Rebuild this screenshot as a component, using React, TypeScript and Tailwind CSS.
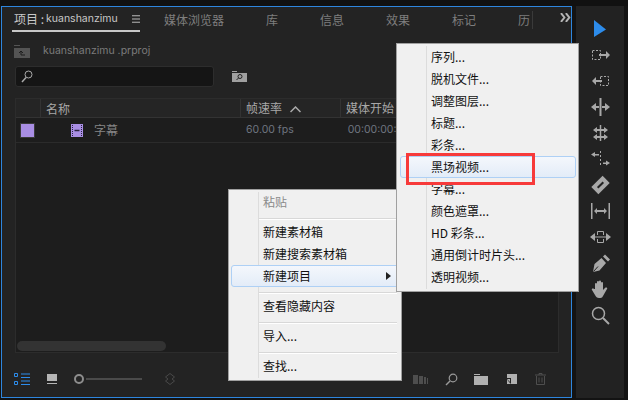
const cjk = "font-['Microsoft_YaHei','Noto_Sans_CJK_SC',sans-serif]";

function Sep() {
  return <div className="mb-[1px] ml-[28px] mr-[3px] mt-[5px] h-[2px] border-t border-[#d8d8d8] bg-white" />;
}

function Item({ label, disabled, active, arrow, pad }: { label: string; disabled?: boolean; active?: boolean; arrow?: boolean; pad: string }) {
  return (
    <div
      className={`relative flex h-[22px] items-center whitespace-nowrap text-[12px] ${pad} ${disabled ? "text-[#8a8a8a]" : "text-[#111]"} ${
        active ? "rounded-[3px] border border-[#aed0f5] bg-gradient-to-b from-[#f4f7fc] to-[#e3ecf8]" : ""
      }`}
    >
      {label}
      {arrow && <div className="absolute right-[8px] top-[6px] h-0 w-0 border-y-[4px] border-l-[5px] border-y-transparent border-l-[#222]" />}
    </div>
  );
}

function Tool({ children }: { children: React.ReactNode }) {
  return <svg width="21" height="20" viewBox="0 0 21 20" className="mb-[6px]">{children}</svg>;
}

function Tools() {
  return (
    <div className="flex w-[48px] flex-col items-center bg-[#222222] pt-[14px] text-[#a8a8a8]">
      <svg width="14" height="17" viewBox="0 0 14 17" className="mb-[8px]"><path d="M1 0 L13 9.500 L1 17 Z" fill="#2d8ceb" /></svg>
      <Tool>
        <rect x="2.500" y="5.500" width="8" height="9" fill="none" stroke="currentColor" strokeDasharray="2 1.500" />
        <path d="M9 9h7V6l4 4-4 4v-3H9z" fill="currentColor" />
      </Tool>
      <Tool>
        <rect x="10.500" y="5.500" width="8" height="9" fill="none" stroke="currentColor" strokeDasharray="2 1.500" />
        <path d="M12 9H6V6l-4 4 4 4v-3h6z" fill="currentColor" />
      </Tool>
      <Tool>
        <path d="M9.500 1h2v18h-2z" fill="currentColor" />
        <path d="M1 10l5-4v3h3v2H6v3zM20 10l-5-4v3h-3v2h3v3z" fill="currentColor" />
      </Tool>
      <Tool>
        <path d="M3 7l4-3v2h7V4l4 3-4 3V8H7v2zM3 14l4-3v2h7v-2l4 3-4 3v-2H7v2z" fill="currentColor" />
        <path d="M10.500 2v16" stroke="currentColor" strokeWidth="1.500" />
      </Tool>
      <Tool>
        <path d="M9 5H5V3L1 5.500 5 8V6.500h4zM13 13.500h3v-2l4 2.500-4 2.500v-1.500h-3z" fill="currentColor" />
        <path d="M10.500 2v16" stroke="currentColor" strokeDasharray="2 2" />
      </Tool>
      <Tool>
        <g transform="rotate(45 10.500 10)">
          <rect x="5.500" y="2" width="10" height="16" fill="currentColor" />
          <rect x="9.500" y="6" width="2" height="8" fill="#222" />
        </g>
      </Tool>
      <Tool>
        <path d="M1 2h1.500v16H1zM18.500 2H20v16h-1.500zM4 10l3-3v2h7V7l3 3-3 3v-2H7v2z" fill="currentColor" />
      </Tool>
      <Tool>
        <path d="M0 10l5-4v8zM21 10l-5-4v8z" fill="currentColor" />
        <path d="M5 10h11" stroke="currentColor" />
        <path d="M7.500 8V4.500h6V8M7.500 12v3.500h6V12" fill="none" stroke="currentColor" />
      </Tool>
      <Tool>
        <path d="M3 19l1.500-8L11.500 5l4.500 5-6.500 7.500zM13 3.500L15 1.500l5 5-2 2z" fill="currentColor" />
        <path d="M3.500 18.500l4.500-5" stroke="#222" />
      </Tool>
      <Tool>
        <path d="M5 10V5a1 1 0 012 0v4-6a1 1 0 012 0v6-6.500a1 1 0 012 0V9V4a1 1 0 012 0v7l2-2c1-1 3 0 2 1l-4 7c-1 2-2 2-4 2H9c-2 0-3-1-4-3l-3-5c-1-1 1-2 2-1z" fill="currentColor" />
      </Tool>
      <Tool>
        <circle cx="8.500" cy="8.500" r="6" fill="none" stroke="currentColor" strokeWidth="1.500" />
        <path d="M13 13l6 6" stroke="currentColor" strokeWidth="2" />
      </Tool>
    </div>
  );
}

export default function App() {
  const pad1 = "pl-[32px]";
  return (
    <div className={`relative flex h-[400px] w-[628px] flex-col overflow-hidden bg-[#131313] ${cjk}`}>
      <div className="h-[6px] bg-[#111]" />
      <div className="flex h-[392px] gap-[4px] pl-[1px]">
        {/* project panel */}
        <div className="flex h-[392px] w-[571px] flex-col border border-[#2e86de] bg-[#232323] text-[#a5a5a5]">
          <div className="flex h-[25px] whitespace-nowrap text-[12px]">
            <div className="ml-[10px] flex h-[25px] w-[128px] items-center border-b-2 border-[#c8c8c8] pl-[2px] text-[#c8c8c8]">
              <span>项目 :</span>
              <span className="ml-[2px] font-['Inter',sans-serif] text-[10.500px]">kuanshanzimu</span>
              <svg width="9" height="8" viewBox="0 0 9 8" className="ml-[14px]"><path d="M0 .5h9M0 4h9M0 7.500h9" stroke="#c8c8c8" /></svg>
            </div>
            <div className="ml-[24px] flex w-[392px] items-center text-[#7e7e7e]">
              <span className="w-[102px]">媒体浏览器</span>
              <span className="w-[54px]">库</span>
              <span className="w-[66px]">信息</span>
              <span className="w-[66px]">效果</span>
              <span className="w-[66px]">标记</span>
              <span className="w-[15px] border-r border-[#3a3a3a]">历</span>
            </div>
            <svg width="11" height="9" viewBox="0 0 11 9" className="ml-[12px] mt-[6px]"><path d="M1 0l3.500 4.500L1 9M6 0l3.500 4.500L6 9" fill="none" stroke="#b5b5b5" strokeWidth="2" /></svg>
          </div>

          <div className="mt-[12px] flex h-[14px] items-center pl-[12px]">
            <svg width="16" height="13" viewBox="0 0 16 13"><path d="M0 0h6v1H0zM0 3h16v10H0z" fill="#545454" /><path d="M5 8l2-2 2 2M7 6v4h4" fill="none" stroke="#1d1d1d" /></svg>
            <span className="ml-[13px] font-['Inter',sans-serif] text-[10.500px] leading-[12px] text-[#7b7b7b]">kuanshanzimu .prproj</span>
          </div>

          <div className="mt-[8px] flex h-[21px] items-center pl-[13px]">
            <div className="flex h-[21px] w-[199px] items-center rounded-[3px] border border-[#2d2d2d] bg-[#151515] pl-[5px]">
              <svg width="12" height="13" viewBox="0 0 12 13"><circle cx="7.500" cy="4.500" r="3.500" fill="none" stroke="#aaa" /><path d="M5 7.500L1 12" stroke="#aaa" strokeWidth="1.500" /></svg>
            </div>
            <svg width="15" height="11" viewBox="0 0 15 11" className="ml-[18px]"><path d="M0 0h5v1H0zM0 2h15v9H0z" fill="#a0a0a0" /><circle cx="8" cy="5.500" r="2" fill="none" stroke="#222" /><path d="M6.500 7L4.500 9" stroke="#222" /></svg>
          </div>

          {/* table */}
          <div className="ml-[13px] mt-[11px] flex h-[255px] w-[544px] flex-col border border-[#2c2c2c] bg-[#1d1d1d]">
            <div className="flex h-[19px] items-center border-b border-[#333] bg-[#252525] text-[12px] text-[#a8a8a8]">
              <div className="h-full w-[25px] border-r border-[#333]" />
              <div className="h-full w-[200px] border-r border-[#333] pl-[5px] leading-[19px]">名称</div>
              <div className="flex h-full w-[100px] items-center border-r border-[#333] pl-[5px]">
                帧速率
                <svg width="11" height="7" viewBox="0 0 11 7" className="ml-[8px] mt-[2px]"><path d="M.5 6l5-5 5 5" fill="none" stroke="#aaa" strokeWidth="1.500" /></svg>
              </div>
              <div className="pl-[5px]">媒体开始</div>
            </div>
            <div className="flex h-[25px] items-center border-b border-[#2b2b2b]">
              <div className="ml-[4px] h-[15px] w-[15px] border border-[#3a3a3a] bg-[#a98ee4]" />
              <svg width="12" height="13" viewBox="0 0 12 13" className="ml-[36px]">
                <rect width="12" height="13" fill="#a98ee4" />
                <path d="M1.500 1v11M10.500 1v11" stroke="#2a2340" strokeDasharray="1 1" />
                <path d="M3.500 6.500h5" stroke="#2a2340" strokeWidth="1.500" />
              </svg>
              <span className="ml-[11px] text-[12px] text-[#858585]">字幕</span>
              <span className="ml-[128px] font-['Inter',sans-serif] text-[10.500px] text-[#6f7580]">60.00 fps</span>
              <span className="ml-[54px] font-['Inter',sans-serif] text-[10.500px] text-[#6f7580]">00:00:00:</span>
            </div>
            <div className="flex-1" />
            <div className="mb-[1px] ml-[1px] h-[10px] w-[149px] rounded-[5px] bg-[#333333]" />
          </div>

          {/* footer */}
          <div className="mt-[19px] flex h-[14px] items-center pl-[12px]">
            <svg width="16" height="12" viewBox="0 0 16 12"><path d="M.5.500h3v3h-3zM.5 8.500h3v3h-3z" fill="none" stroke="#2d8ceb" /><path d="M7 1h9M7 4.500h9M7 8h9M7 11.500h9" stroke="#2d8ceb" /></svg>
            <svg width="10" height="10" viewBox="0 0 10 10" className="ml-[17px]"><path d="M0 0h10v7H0zM0 9h10v1H0z" fill="#b5b5b5" /></svg>
            <div className="ml-[17px] h-[10px] w-[10px] rounded-full border-2 border-[#8d8d8d]" />
            <div className="ml-[2px] h-[2px] w-[56px] bg-[#4a4a4a]" />
            <svg width="10" height="12" viewBox="0 0 10 12" className="ml-[23px]"><path d="M5 .500L9.500 4 7 6l2.500 2L5 11.500.5 8 3 6 .5 4z" fill="none" stroke="#4a4a4a" /></svg>
            <svg width="15" height="9" viewBox="0 0 15 9" className="ml-[238px]"><path d="M0 0h5v9H0zM6 1h4v8H6zM11 2h2v7h-2zM14 3h1v6h-1z" fill="#4e4e4e" /></svg>
            <svg width="13" height="13" viewBox="0 0 13 13" className="ml-[17px]"><circle cx="8" cy="5" r="3.800" fill="none" stroke="#9a9a9a" strokeWidth="1.200" /><path d="M5 8l-4 4" stroke="#9a9a9a" strokeWidth="1.500" /></svg>
            <svg width="14" height="11" viewBox="0 0 14 11" className="ml-[16px]"><path d="M0 0h6v1H0zM0 2h14v9H0z" fill="#b0b0b0" /></svg>
            <svg width="11" height="11" viewBox="0 0 11 11" className="ml-[18px]"><path d="M1 0h10v10H1z" fill="#b0b0b0" /><path d="M0 4h5v6L3 8z" fill="#232323" /><path d="M1 5h3v3z" fill="#b0b0b0" /></svg>
            <svg width="11" height="12" viewBox="0 0 11 12" className="ml-[18px]"><path d="M0 2h11M4 2V.500h3V2M1.500 3v8.500h8V3M4 4.500v5M7 4.500v5" fill="none" stroke="#4e4e4e" /></svg>
          </div>
        </div>
        <Tools />
      </div>

      {/* context menu */}
      <div className="absolute left-[228px] top-[189px] h-[192px] w-[174px] border border-[#a0a0a0] bg-[#f0f0f0] py-[1px] pl-[2px] pr-[1px]">
        <div className="absolute bottom-[2px] left-[29px] top-[2px] w-[1px] bg-[#dcdcdc]" />
        <div className="relative">
          <Item pad={pad1} label="粘贴" disabled />
          <Sep />
          <Item pad={pad1} label="新建素材箱" />
          <Item pad={pad1} label="新建搜索素材箱" />
          <Item pad="pl-[31px]" label="新建项目" active arrow />
          <Sep />
          <Item pad={pad1} label="查看隐藏内容" />
          <Sep />
          <Item pad={pad1} label="导入..." />
          <Sep />
          <Item pad={pad1} label="查找..." />
        </div>
      </div>

      {/* submenu */}
      <div className="absolute left-[396px] top-[43px] h-[249px] w-[183px] border border-[#a0a0a0] bg-[#f0f0f0] py-[2px] pl-[3px] pr-[2px]">
        <div className="absolute bottom-[2px] left-[29px] top-[2px] w-[1px] bg-[#dcdcdc]" />
        <div className="relative">
          {["序列...", "脱机文件...", "调整图层...", "标题...", "彩条..."].map((t) => <Item key={t} pad="pl-[31px]" label={t} />)}
          <Item pad="pl-[30px]" label="黑场视频..." active />
          {["字幕...", "颜色遮罩...", "HD 彩条...", "通用倒计时片头...", "透明视频..."].map((t) => <Item key={t} pad="pl-[31px]" label={t} />)}
        </div>
      </div>

      {/* red annotation */}
      <div className="absolute left-[406px] top-[153px] h-[32px] w-[129px] border-[3px] border-[#f73a3a]" />
    </div>
  );
}
